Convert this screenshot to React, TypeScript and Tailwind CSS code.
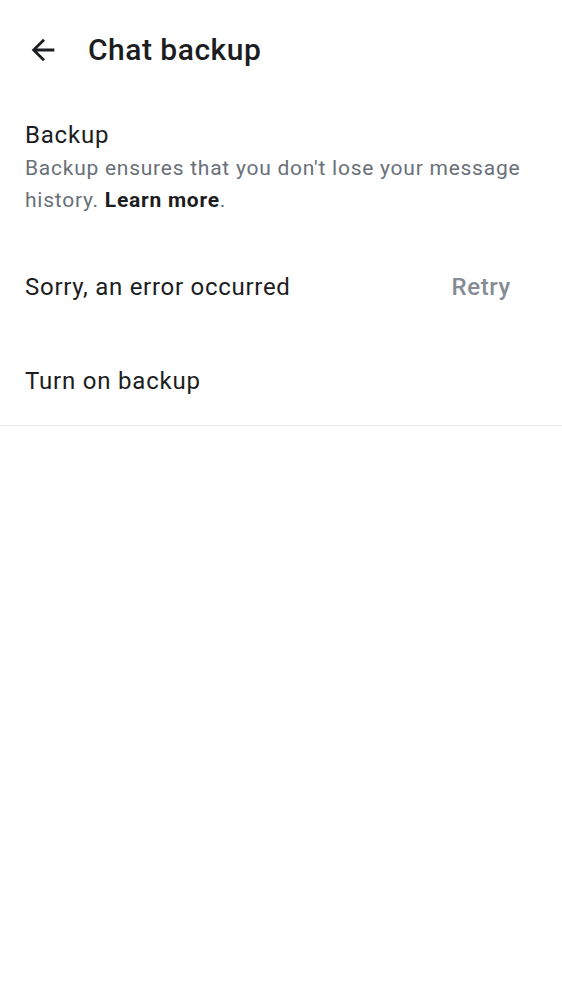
import React from "react";

function BackArrow() {
  return (
    <svg width="34" height="34" viewBox="0 0 24 24" fill="#1c1d21" aria-hidden="true">
      <path d="M20 11H7.83l5.59-5.59L12 4l-8 8 8 8 1.41-1.41L7.83 13H20v-2z" />
    </svg>
  );
}

export default function App() {
  return (
    <div className="min-h-[1000px] w-[562px] bg-white font-['Roboto','Noto_Sans',sans-serif] text-[#1c1d21]">
      <header className="flex h-[100px] items-center">
        <button className="ml-[26px] flex h-[34px] w-[34px] items-center justify-center">
          <BackArrow />
        </button>
        <h1 className="ml-[28px] text-[30px] font-medium leading-none tracking-[0.5px]">Chat backup</h1>
      </header>
      <section className="px-[25px] pt-[20px]">
        <div className="text-[24px] leading-[30px] tracking-[0.8px]">Backup</div>
        <p className="mt-[2px] text-[21px] leading-[32px] tracking-[0.75px] text-[#697079]">
          Backup ensures that you don't lose your message history.{" "}
          <span className="font-bold text-[#1c1d21]">Learn more</span>.
        </p>
      </section>
      <div className="mt-[56px] flex items-center justify-between pl-[25px] pr-[51px]">
        <span className="text-[24px] leading-[30px] tracking-[0.72px]">Sorry, an error occurred</span>
        <span className="text-[24px] font-medium leading-[30px] tracking-[0.64px] text-[#868c93]">Retry</span>
      </div>
      <div className="mt-[64px] px-[25px] text-[24px] leading-[30px] tracking-[0.8px]">Turn on backup</div>
      <div className="mt-[29px] h-px bg-[#e7e8ea]" />
    </div>
  );
}
